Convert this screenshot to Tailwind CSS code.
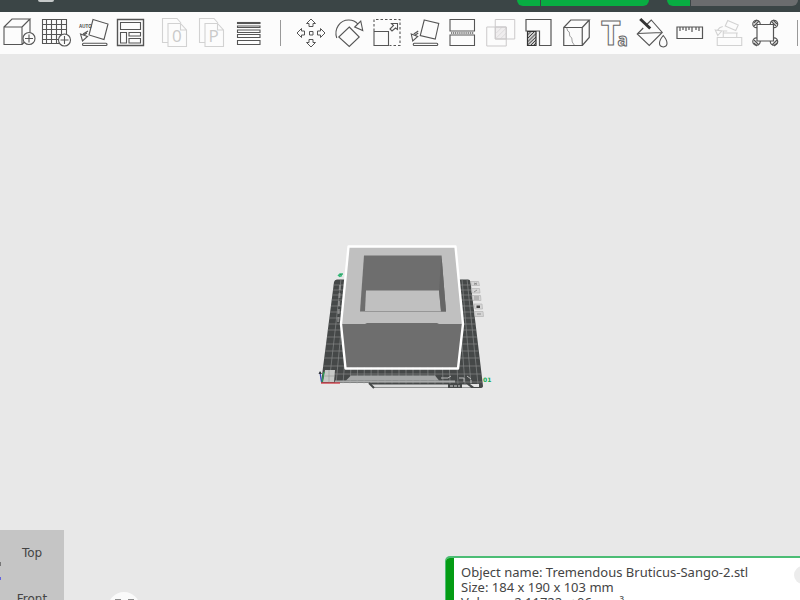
<!DOCTYPE html>
<html lang="en">
<head>
<meta charset="utf-8">
<title>Prepare</title>
<script src="https://cdn.jsdelivr.net/npm/@tailwindcss/browser@4"></script>
</head>
<body class="flex h-screen flex-col overflow-hidden bg-[#e8e8e8] font-['Noto_Sans',sans-serif] text-[#444]">
<header class="flex h-3 shrink-0 items-start justify-between bg-[#3b4546] pl-[38px]">
  <div class="h-0.5 w-4 rounded-b-sm bg-[#c5c9c9]"></div>
  <div class="flex h-[6px] gap-[18px]">
    <div class="flex gap-px">
      <button aria-label="Slice options" class="w-[23px] rounded-bl-lg bg-[#08ad42]"></button>
      <button aria-label="Slice plate" class="w-[108px] rounded-br-lg bg-[#08ad42]"></button>
    </div>
    <div class="flex gap-px">
      <button aria-label="Print options" class="w-[23px] rounded-bl-lg bg-[#08ad42]"></button>
      <button aria-label="Print plate" class="mr-[2px] w-[107px] rounded-br-lg bg-[#6b6c6e]"></button>
    </div>
  </div>
</header>

<nav aria-label="Tools" class="flex h-[42px] shrink-0 items-center bg-[#fcfcfc] pl-px pr-[2px]">
  <div class="flex">
    <button aria-label="Add model"><svg class="h-[42px] w-[37px]" viewBox="1 12 37 42" fill="none" stroke="#555" stroke-width="1.1"><path d="M4 27h18v17.500H4zM4 27l8-8h18l-8 8M30 19v14M22 44.500l3-3"/><circle cx="29" cy="38.500" r="6" fill="#fcfcfc"/><path d="M29 34.500v8M25 38.500h8"/></svg></button>
    <button aria-label="Add plate"><svg class="h-[42px] w-[37px]" viewBox="38 12 37 42" fill="none" stroke="#555" stroke-width="1.100"><path d="M42.500 19.500h24v24h-24zM42.500 24.500h24M42.500 29.500h24M42.500 34.500h24M42.500 39.500h24M46.500 19.500v24M51.500 19.500v24M56.500 19.500v24M61.500 19.500v24"/><circle cx="64.500" cy="40" r="6" fill="#fcfcfc"/><path d="M64.500 36v8M60.500 40h8"/></svg></button>
    <button aria-label="Auto orient"><svg class="h-[42px] w-[37px]" viewBox="75 12 37 42" fill="none" stroke="#555" stroke-width="1.100"><text x="79" y="27.500" font-family="Liberation Sans" font-weight="bold" font-size="4.500" fill="#444" stroke="none">AUTO</text><path d="M93 19.500l15 4.500-4 15.500-15-4.500zM80.500 34l7 2.500-5 4.500zM83 34l5-3M84 35l3-2"/><rect x="82.500" y="43.300" width="24.500" height="2.200" rx="1"/></svg></button>
    <button aria-label="Arrange"><svg class="h-[42px] w-[37px]" viewBox="112 12 37 42" fill="none" stroke="#555" stroke-width="1.100"><path stroke-width="1.400" d="M117.500 19.500h26v26h-26z"/><path d="M120.500 22.500h20v7h-20zM120.500 32.500h6v10.500h-6zM129 32.500h11.500v3.500H129zM129 38.500h11.500v4.500H129z"/></svg></button>
  </div>
  <div class="ml-[7px] flex">
    <button disabled aria-label="Split to objects"><svg class="h-[42px] w-[37px]" viewBox="156 12 37 42" fill="none" stroke="#d2d2d2" stroke-width="1.100"><path d="M167.500 42.500h-5v-24H177l4 4.500M168 23.500h12.500l6 6.500v16.500H168zM180.500 23.500v6.500h6"/><text x="172" y="41.500" font-family="Open Sans" font-size="17" fill="#cacaca" stroke="none">0</text></svg></button>
    <button disabled aria-label="Split to parts"><svg class="h-[42px] w-[37px]" viewBox="193 12 37 42" fill="none" stroke="#d2d2d2" stroke-width="1.100"><path d="M204.500 42.500h-5v-24H214l4 4.500M205 23.500h12.500l6 6.500v16.500H205zM217.500 23.500v6.500h6"/><text x="208.500" y="41.500" font-family="Open Sans" font-size="17" fill="#cacaca" stroke="none">P</text></svg></button>
    <button aria-label="Variable layer height"><svg class="h-[42px] w-[37px]" viewBox="230 12 37 42" fill="none" stroke="#555" stroke-width="1.100"><path fill="#555" d="M237.500 22.500h22.500v1h-22.500z"/><path d="M237.500 26h22.500v1.500h-22.500zM237.500 30h22.500v2.500h-22.500zM237.500 34.500h22.500v3h-22.500zM237.500 40.500h22.500v4h-22.500z"/></svg></button>
  </div>
  <div class="mx-3 ml-[13px] h-[26px] w-px bg-[#999]"></div>
  <div class="flex flex-1 justify-between">
    <button aria-label="Move"><svg class="h-[42px] w-9" viewBox="293 12 36 42" fill="none" stroke="#555" stroke-width="1"><path d="M309.500 31.500h3.500v3.500h-3.500z"/><g id="arrow"><path d="M311 19l4.500 4.500h-2.500v3h-4v-3h-2.500z"/></g><use href="#arrow" transform="rotate(90 311 33)"/><use href="#arrow" transform="rotate(180 311 33)"/><use href="#arrow" transform="rotate(270 311 33)"/></svg></button>
    <button aria-label="Rotate"><svg class="h-[42px] w-9" viewBox="330.750 12 36 42" fill="none" stroke="#555" stroke-width="1.100"><path d="M349 27l10 10-10 9.500L338.500 37zM336.500 38c-3-9 3-18 12-18 4 0 7 1.500 9 4M354.500 27l6-6 2 9.500z"/></svg></button>
    <button aria-label="Scale"><svg class="h-[42px] w-9" viewBox="368.500 12 36 42" fill="none" stroke="#555" stroke-width="1.100"><path stroke-dasharray="2.500 2" d="M373.500 31V19.500h26v26H389"/><path d="M373.500 31.500h14.500v14h-14.500zM391 23.500h6v6l-2-1.500-3.500 3-2-2 3.500-3.500z"/></svg></button>
    <button aria-label="Lay on face"><svg class="h-[42px] w-9" viewBox="406.250 12 36 42" fill="none" stroke="#555" stroke-width="1.100"><path d="M424.500 20l14.500 3.500-3.500 15.500-15-3.500zM411.500 34l6.500 2.500-5 4.500zM414 34l4.500-3M415.500 35l3-2"/><rect x="413.500" y="43.300" width="24.500" height="2.200" rx="1"/></svg></button>
    <button aria-label="Cut"><svg class="h-[42px] w-9" viewBox="444 12 36 42" fill="none" stroke="#555" stroke-width="1.100"><path d="M450 19.500h24.500V31H450zM450 35h24.500v10.500H450z"/><path stroke-width="1.800" stroke="#888" stroke-dasharray="1.200 .7" d="M451 33h23"/></svg></button>
    <button disabled aria-label="Mesh boolean"><svg class="h-[42px] w-9" viewBox="481.750 12 36 42" fill="none" stroke="#cbc9ca" stroke-width="1"><path fill="#efedee" d="M495 27h11v12h-11z"/><path d="M486.500 27H506v19h-19.500zM495 19.500h19.500V39H495z"/><path stroke-width=".5" d="M496 33l6-6M496 38l10-10M500 39l6-6"/></svg></button>
    <button aria-label="Support painting"><svg class="h-[42px] w-9" viewBox="519.500 12 36 42" fill="none" stroke="#555" stroke-width="1.200"><path d="M525.500 19.500h25v26H539V31h-13.500z"/><path stroke="#333" fill="#ccc" d="M527 31.500h8.500v14H527z"/><path stroke="#333" stroke-width=".9" d="M527 35l3.500-3.500M527 38.500l7-7M527 42l8.500-8.500M527 45l8.500-8M530 45.500l5.500-5.500M533 45.500l2.500-2.500"/></svg></button>
    <button aria-label="Seam painting"><svg class="h-[42px] w-9" viewBox="557.250 12 36 42" fill="none" stroke="#555" stroke-width="1.200"><path d="M563 27.500h18.500v18H563zM563 27.500l7-7.500h18.500l-7 7.500M588.500 20v17.500l-7 8"/><path stroke-width=".8" stroke="#888" d="M566 28l1 3 1.500 1 .5 4 2 2 .5 4 2 3"/></svg></button>
    <button aria-label="Text shape"><svg class="h-[42px] w-9" viewBox="595 12 36 42" fill="#fcfcfc" stroke="#666" stroke-width="1"><text x="600" y="44.500" font-family="Open Sans" font-weight="bold" font-size="34">T</text><text x="616.500" y="46" font-family="Open Sans" font-weight="bold" font-size="17">a</text></svg></button>
    <button aria-label="Color painting"><svg class="h-[42px] w-9" viewBox="632.750 12 36 42" fill="none" stroke="#555" stroke-width="1.100"><path d="M646 25l5-5 11 12.500L649 45.500 637 34l6-6M637 33.500l25-1M663 35.500c5 6 5 11 0 11.500-5-.5-5-5.500 0-11.500z" /><path stroke="#333" stroke-width="3" d="M640 19l10 9.500"/></svg></button>
    <button aria-label="Measure"><svg class="h-[42px] w-9" viewBox="670.500 12 36 42" fill="none" stroke="#555" stroke-width="1.200"><path d="M676.500 27h25.500v11.500h-25.500zM679.500 27v4M682.500 27v3M685.500 27v4M688.500 27v3M691.500 27v5M695.500 27v3M698.500 27v4"/></svg></button>
    <button disabled aria-label="Assembly"><svg class="h-[42px] w-9" viewBox="708.250 12 36 42" fill="none" stroke="#d2d2d2" stroke-width="1.100"><path d="M716.500 37.500H741v8h-24.500zM722.500 37v-6h4M736 37v-4M727 20.500l10.500 4.500-2.500 5.500L724.500 26zM723 33h14M714.500 30l6.500 1-4 4.500zM717 30c1-2 2.500-3 5-3.500"/></svg></button>
    <button aria-label="Assembly view"><svg class="h-[42px] w-9" viewBox="746 12 36 42" fill="#fcfcfc" stroke="#555" stroke-width="1.200"><circle cx="755.500" cy="24" r="3.700"/><circle cx="773" cy="24" r="3.700"/><circle cx="755.500" cy="41.500" r="3.700"/><circle cx="773" cy="41.500" r="3.700"/><path d="M753 23l3-3M753 26l5-5M770 21l5 5M772 20l4 4M753 40l5 5M753 43l3 3M771 45l5-5M773 46l3-3"/><path d="M756 24.500h16.500V41H756z"/></svg></button>
  </div>
  <div class="ml-[14px] h-[26px] w-px bg-[#999]"></div>
</nav>

<main class="relative flex-1 overflow-hidden">
  <svg class="absolute inset-0 size-full" viewBox="0 54 800 546" preserveAspectRatio="xMidYMid slice" role="img" aria-label="Model on build plate">
    <defs><clipPath id="bed"><path d="M337 279.500h131q2 0 2.500 2L482 384l-161-1 13-101q.5-2.500 3-2.500z"/></clipPath></defs>
    <path fill="#454848" d="M337 279.500h131q2 0 2.500 2L483 386q0 2-3 2H374l-5-5h-48l13-101q.5-2.500 3-2.500z"/>
    <g clip-path="url(#bed)" stroke="#858888" stroke-width=".7" fill="none">
      <path d="M320 285h165M320 290h165M320 295h165M320 300h165M320 306h165M320 312h165M320 318h165M320 324h165M320 330h165M320 337h165M320 344h165M320 351h165M320 358h165M320 366h165M320 374h165M320 382h165"/>
      <path d="M341 279l-12 105M346 279l-10 105M351 279l-8 105M356 279l-6 105M361 279l-4 105M366 279l-2 105M372 279l-1 105M378 279v105M385 279v105M392 279v105M399 279v105M406 279v105M413 279v105M420 279v105M427 279l1 105M434 279l1 105M440 279l3 105M446 279l4 105M452 279l6 105M457 279l8 105M462 279l9 105M467 279l11 105"/>
    </g>
    <path d="M340 285l-2 40" stroke="#aaa" stroke-width="2" stroke-dasharray="5 3" opacity=".6"/>
    <path fill="#c6c9c7" d="M325 370h10l-1 12h-11z"/>
    <path d="M324 376h10M329 370v12" stroke="#999" stroke-width=".6"/>
    <path fill="#a5a7a7" d="M351 375.500h84l4 5H346z"/>
    <path d="M335 381.500h120" stroke="#a9abab" stroke-width="2"/>
    <path d="M441 378h7l3-2M459 378h5v4M467 376l4 3M471 380v3" stroke="#bbb" fill="none"/>
    <path fill="#d9dada" d="M371 384.500h77v3h-75z"/>
    <path d="M369 383l5 5" stroke="#454848" stroke-width="2"/>
    <path d="M376 386h5M450 386h10" stroke="#ddd" stroke-dasharray="3 1"/>
    <path fill="#e5e5e5" d="M462 384.500h5l4 3h-9zM470 384h9v3h-5z"/>
    <path stroke="#ce3540" stroke-width="1.300" d="M321 383h19"/>
    <path stroke="#3545b8" stroke-width="1.300" d="M321.500 382l-1.500-10"/>
    <path stroke="#29a354" stroke-width="1.200" d="M322 382l2-10"/>
    <path fill="#343939" d="M318.500 374l1.500-3 2 3z"/>
    <path stroke="#35b978" stroke-width="1.500" d="M338 276l2-2h3M339 276.500l3-1"/>
    <text x="483" y="382" font-family="DejaVu Sans" font-size="6" font-weight="bold" fill="#13aa54">01</text>
    <g fill="#d5d5d5" stroke="#b4b4b4" stroke-width=".7">
      <path d="M470.500 281.500h8l1 4h-8zM471.500 288.500h8l.5 4.500h-8zM472 295.500h8.500l.5 5H473zM474 304h8l.5 5H475zM474.500 311.500h8.500l.5 5H475z"/>
      <path stroke="#777" fill="none" d="M474 283l3 1.500M477 283l-3 1.500M474 292l3-2M474 297h5M474 299h5M477 314h4"/>
      <path stroke="none" fill="#444" d="M476.500 305.500h3.500v2.500h-3.500z"/>
    </g>
    <path fill="#c0c0c0" d="M348.500 247h107l7 77h-121z"/>
    <path fill="#6e6e6e" d="M341.500 324H365l2-1h70l2 1h23.500l-4.500 43.500H345.500z"/>
    <path fill="#6e6e6e" d="M364 255.500h77.500l4.500 56h-86z"/>
    <path fill="#c0c0c0" d="M366 290.500h73l2 20.500h-76z"/>
    <path fill="#666" d="M439 290.500l2.500-35L446 311.500h-5z"/>
    <path fill="none" stroke="#fff" stroke-width="2.400" stroke-linejoin="round" d="M348.500 246.500h107l7.500 77.500-5 44.500H345.500L341 324z"/>
  </svg>

  <div class="absolute bottom-0 left-0 h-[70px] w-16 overflow-hidden bg-[#c5c5c5] font-['DejaVu_Sans',sans-serif] text-[12px] leading-4">
    <div class="flex flex-col gap-[30px] pt-[15px] text-center">
      <span>Top</span>
      <span>Front</span>
    </div>
    <div class="absolute left-0 top-8 h-1 w-px bg-[#777]"></div>
    <div class="absolute left-0 top-[47px] h-[3px] w-px bg-[#6262e0]"></div>
  </div>

  <button aria-label="View options" class="absolute -bottom-6 left-[108px] flex size-8 justify-center gap-[7px] rounded-full bg-[#fafafa] pt-[7px]">
    <span class="h-1 w-1.5 bg-[#8b8b8b]"></span><span class="h-1 w-1.5 bg-[#8b8b8b]"></span>
  </button>

  <section aria-label="Object information" class="absolute bottom-0 left-[445px] right-0 flex h-11 overflow-hidden rounded-tl-[5px] border-l border-t-2 border-[#4cbd75] bg-white">
    <div class="w-2 shrink-0 bg-[#049c14]"></div>
    <div class="whitespace-nowrap pl-[7px] pt-[7px] text-[13px] leading-[15px]">
      <p>Object name: Tremendous Bruticus-Sango-2.stl</p>
      <p>Size: 184 x 190 x 103 mm</p>
      <p>Volume: 2.11722e+06 mm³</p>
    </div>
    <button aria-label="Close" class="absolute -right-3 top-2 size-[18px] rounded-full bg-[#ececec]"></button>
  </section>
</main>
</body>
</html>
